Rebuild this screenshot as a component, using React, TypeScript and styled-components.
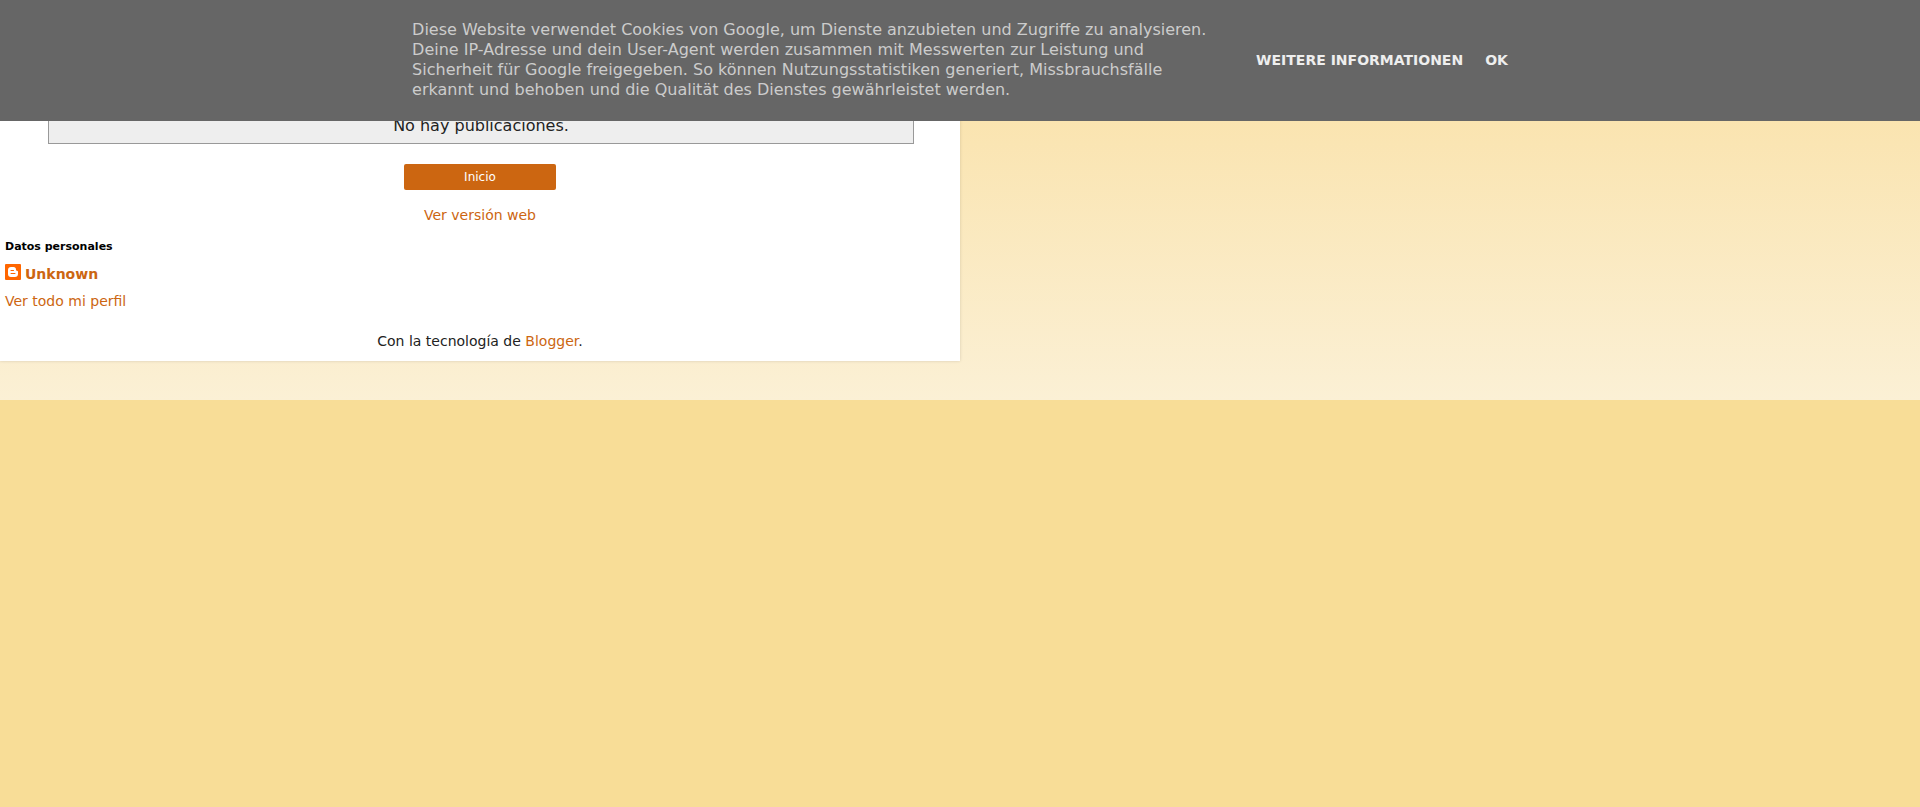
import React from 'react';
import styled, { createGlobalStyle } from 'styled-components';

const GlobalStyle = createGlobalStyle`
  body {
    margin: 0;
    background: #f8dd97;
    color: #222222;
    font: 14px/20px "DejaVu Sans", sans-serif;
  }
`;

const CookieBar = styled.aside`
  position: fixed;
  z-index: 10;
  inset: 0 0 auto;
  display: flex;
  justify-content: center;
  align-items: center;
  gap: 42px;
  box-sizing: border-box;
  padding: 20px 24px 21px;
  background: #666666;
`;

const CookieText = styled.p`
  max-width: 802px;
  margin: 0;
  color: #cccccc;
  font-size: 16px;
`;

const CookieActions = styled.div`
  display: flex;
  gap: 22px;
`;

const CookieLink = styled.a`
  color: #eeeeee;
  font-weight: bold;
  text-decoration: none;
  text-transform: uppercase;
  white-space: nowrap;
`;

const Backdrop = styled.div`
  padding-bottom: 39px;
  background: linear-gradient(#f9dc9c 0, #fae4b0 121px, #fbf0d5 100%);
`;

const Page = styled.div`
  display: flex;
  flex-direction: column;
  width: 50%;
  padding-top: 100px;
  background: #ffffff;
  box-shadow: 0 0 3px rgba(0, 0, 0, 0.15);
`;

const Main = styled.main`
  display: flex;
  flex-direction: column;
  align-items: center;
`;

const StatusMessage = styled.p`
  box-sizing: border-box;
  width: calc(90% + 2px);
  margin: 0 0 20px 2px;
  padding: 15px 0 7px;
  border: 1px solid #999999;
  background: #eeeeee;
  font-size: 16px;
  text-align: center;
`;

const HomeLink = styled.a`
  width: 152px;
  border-radius: 2px;
  background: #cc6611;
  color: #ffffff;
  font-size: 12px;
  line-height: 26px;
  text-align: center;
  text-decoration: none;
`;

const TextLink = styled.a`
  color: #cc6611;
  text-decoration: none;
`;

const WebVersion = styled.div`
  margin-top: 15px;
`;

const Profile = styled.section`
  display: flex;
  flex-direction: column;
  align-items: flex-start;
  gap: 7px;
  padding: 12px 5px 0;
`;

const ProfileTitle = styled.h2`
  margin: 0;
  color: #000000;
  font-size: 11px;
  line-height: 20px;
`;

const ProfileName = styled(TextLink)`
  display: flex;
  gap: 4px;
  font-weight: bold;

  svg {
    flex: none;
  }
`;

const Footer = styled.footer`
  padding: 20px 0 10px;
  text-align: center;
`;

const BloggerIcon = () => (
  <svg width="16" height="16" viewBox="0 0 16 16" aria-hidden="true">
    <rect width="16" height="16" rx="1" fill="#ff6600" />
    <path
      d="M6 3h2.500C10.200 3 11 4.200 11 5.500V6c0 .6.3.8.9.8.7 0 1.100.3 1.100.9V10c0 1.900-1.200 3-3 3H6c-1.900 0-3-1.200-3-3V6c0-1.800 1.200-3 3-3Z"
      fill="#ffffff"
    />
    <path d="M6 6.500h2.500M6 9.500h4" stroke="#ff6600" strokeLinecap="round" />
  </svg>
);

export default function App() {
  return (
    <>
      <GlobalStyle />
      <CookieBar>
        <CookieText>
          Diese Website verwendet Cookies von Google, um Dienste anzubieten und Zugriffe zu
          analysieren. Deine IP-Adresse und dein User-Agent werden zusammen mit Messwerten zur
          Leistung und Sicherheit für Google freigegeben. So können Nutzungsstatistiken generiert,
          Missbrauchsfälle erkannt und behoben und die Qualität des Dienstes gewährleistet werden.
        </CookieText>
        <CookieActions>
          <CookieLink href="#info">Weitere Informationen</CookieLink>
          <CookieLink href="#ok">Ok</CookieLink>
        </CookieActions>
      </CookieBar>
      <Backdrop>
        <Page>
          <Main>
            <StatusMessage>No hay publicaciones.</StatusMessage>
            <HomeLink href="#inicio">Inicio</HomeLink>
            <WebVersion>
              <TextLink href="#web">Ver versión web</TextLink>
            </WebVersion>
          </Main>
          <Profile>
            <ProfileTitle>Datos personales</ProfileTitle>
            <ProfileName href="#unknown">
              <BloggerIcon />
              Unknown
            </ProfileName>
            <TextLink href="#perfil">Ver todo mi perfil</TextLink>
          </Profile>
          <Footer>
            Con la tecnología de <TextLink href="#blogger">Blogger</TextLink>.
          </Footer>
        </Page>
      </Backdrop>
    </>
  );
}
